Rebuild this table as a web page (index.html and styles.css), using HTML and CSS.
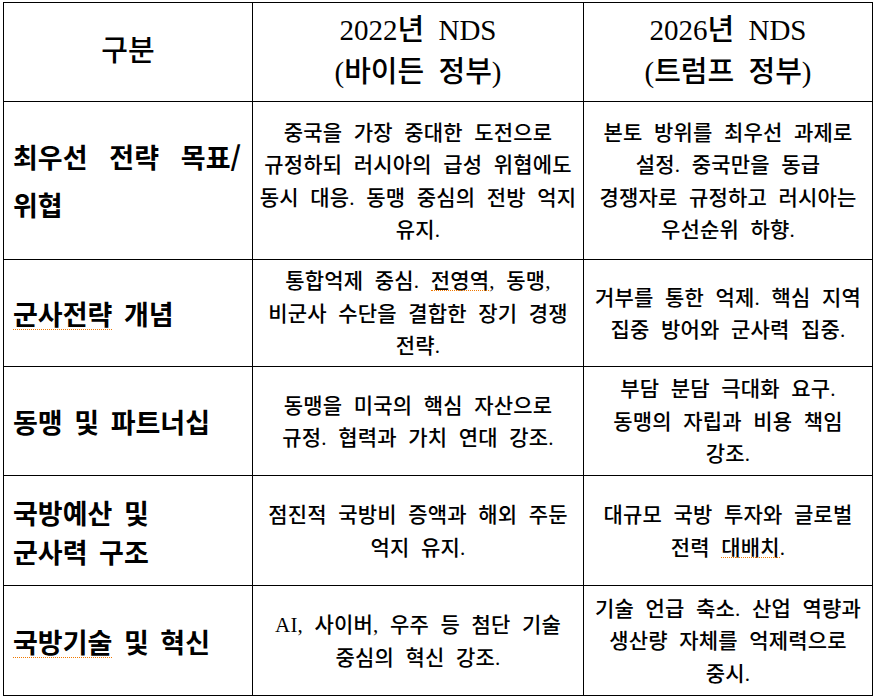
FILE: index.html
```html
<!DOCTYPE html>
<html lang="ko">
<head>
<meta charset="utf-8">
<title>NDS 비교</title>
<link rel="stylesheet" href="styles.css">
</head>
<body>
<table class="nds">
  <colgroup>
    <col class="c1">
    <col class="c2">
    <col class="c3">
  </colgroup>
  <tr class="r-head">
    <th class="head">구분</th>
    <th class="head">2022년 NDS<br>(바이든 정부)</th>
    <th class="head">2026년 NDS<br>(트럼프 정부)</th>
  </tr>
  <tr class="r1">
    <td class="label label-tall">
      <div class="just">최우선 전략 목표/</div>
      <div>위협</div>
    </td>
    <td class="body">중국을 가장 중대한 도전으로<br>규정하되 러시아의 급성 위협에도<br>동시 대응. 동맹 중심의 전방 억지<br>유지.</td>
    <td class="body">본토 방위를 최우선 과제로<br>설정. 중국만을 동급<br>경쟁자로 규정하고 러시아는<br>우선순위 하향.</td>
  </tr>
  <tr class="r2">
    <td class="label"><span class="spell spell-label">군사전략</span> 개념</td>
    <td class="body">통합억제 중심. <span class="spell spell-body">전영역</span>, 동맹,<br>비군사 수단을 결합한 장기 경쟁<br>전략.</td>
    <td class="body">거부를 통한 억제. 핵심 지역<br>집중 방어와 군사력 집중.</td>
  </tr>
  <tr class="r3">
    <td class="label">동맹 및 파트너십</td>
    <td class="body">동맹을 미국의 핵심 자산으로<br>규정. 협력과 가치 연대 강조.</td>
    <td class="body">부담 분담 극대화 요구.<br>동맹의 자립과 비용 책임<br>강조.</td>
  </tr>
  <tr class="r4">
    <td class="label label-two">국방예산 및<br>군사력 구조</td>
    <td class="body">점진적 국방비 증액과 해외 주둔<br>억지 유지.</td>
    <td class="body">대규모 국방 투자와 글로벌<br>전력 <span class="spell spell-body">대배치</span>.</td>
  </tr>
  <tr class="r5">
    <td class="label"><span class="spell spell-label">국방기술</span> 및 혁신</td>
    <td class="body">AI, 사이버, 우주 등 첨단 기술<br>중심의 혁신 강조.</td>
    <td class="body">기술 언급 축소. 산업 역량과<br>생산량 자체를 억제력으로<br>중시.</td>
  </tr>
</table>
</body>
</html>
```

FILE: styles.css
```css
html, body {
  margin: 0;
  padding: 0;
  background: #ffffff;
}

body {
  padding: 2px 0 0 3px;
  color: #000000;
  font-family: "Liberation Serif", "Noto Sans CJK KR", serif;
}

.nds {
  border-collapse: collapse;
  table-layout: fixed;
  width: 869px;
}

.c1 { width: 249px; }
.c2 { width: 331px; }
.c3 { width: 289px; }

.nds th,
.nds td {
  border: 1px solid #000000;
  padding: 0;
  vertical-align: middle;
  white-space: nowrap;
}

.r-head { height: 99px; }
.r1 { height: 158px; }
.r2 { height: 107px; }
.r3 { height: 109px; }
.r4 { height: 110px; }
.r5 { height: 110px; }

.nds .head {
  font-family: "Liberation Serif", "Noto Sans CJK KR", serif;
  font-weight: 500;
  font-size: 29px;
  line-height: 42px;
  word-spacing: 7px;
  text-align: center;
  padding: 0 0 2px 0;
}

.nds .label {
  font-family: "Noto Sans CJK KR", sans-serif;
  font-weight: bold;
  font-size: 27px;
  line-height: 40px;
  word-spacing: 4px;
  text-align: left;
  padding: 2px 11px 0 9px;
}

.nds .label-tall {
  line-height: 48px;
  padding-top: 0;
}

.nds .label-two {
  line-height: 39px;
}

.just {
  text-align: justify;
  text-align-last: justify;
}

.nds .body {
  font-size: 21px;
  font-weight: 500;
  letter-spacing: 0.2px;
  word-spacing: 6px;
  line-height: 32.5px;
  text-align: center;
  padding: 2px 2px 0 2px;
}

.spell {
  position: relative;
}

.spell::after {
  content: "";
  position: absolute;
  left: 0;
  right: 0;
  height: 0;
  border-bottom: 1px dotted #f07800;
}

.spell-label::after {
  bottom: 3px;
}

.spell-body::after {
  bottom: 2px;
}
```
